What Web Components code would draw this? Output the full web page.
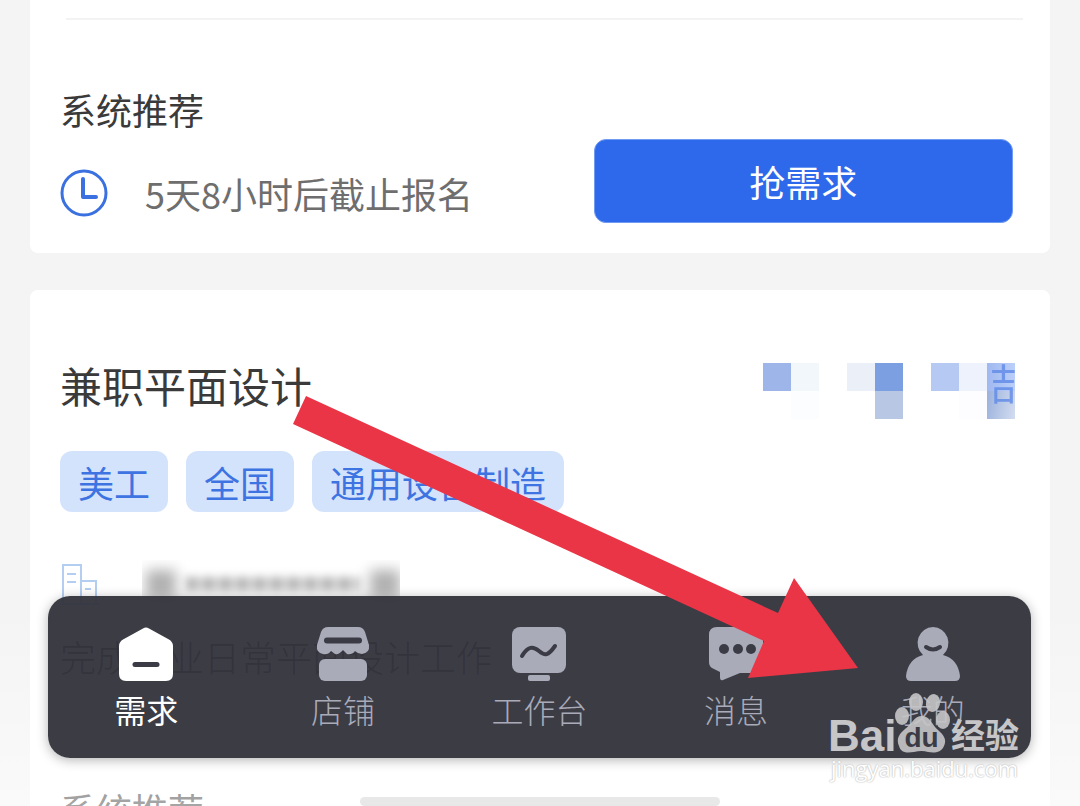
<!DOCTYPE html>
<html lang="zh-CN">
<head>
<meta charset="utf-8">
<meta name="viewport" content="width=device-width, initial-scale=1">
<title>需求</title>
<style>
  html, body { margin: 0; height: 100%; }
  body { font-family: "Noto Sans CJK SC", "Noto Sans", sans-serif; font-size: 36px; line-height: 48px; font-weight: 400; color: #3a3a3a; background: #f4f4f4; }
</style>
</head>
<body>
<demand-app>
  <demand-card>
    <section-rule></section-rule>
    <apply-row heading="系统推荐" action="抢需求">5天8小时后截止报名</apply-row>
  </demand-card>
  <demand-card>
    <demand-head>兼职平面设计</demand-head>
    <tag-list>
      <demand-tag>美工</demand-tag>
      <demand-tag>全国</demand-tag>
      <demand-tag>通用设备制造</demand-tag>
    </tag-list>
    <company-row></company-row>
    <demand-note>完成企业日常平面设计工作</demand-note>
    <section-rule></section-rule>
    <apply-row heading="系统推荐" action="抢需求">5天8小时后截止报名</apply-row>
  </demand-card>
  <tab-bar slot="tabs">
    <tab-item icon="home" active>需求</tab-item>
    <tab-item icon="shop">店铺</tab-item>
    <tab-item icon="board">工作台</tab-item>
    <tab-item icon="chat">消息</tab-item>
    <tab-item icon="user">我的</tab-item>
  </tab-bar>
  <guide-arrow slot="over"></guide-arrow>
  <site-mark slot="over" address="jingyan.baidu.com">经验</site-mark>
</demand-app>

<script>
const define = (name, html) => customElements.define(name, class extends HTMLElement {
  constructor() {
    super();
    const t = document.createElement('template');
    t.innerHTML = typeof html === 'function' ? html(this) : html;
    this.attachShadow({ mode: 'open' }).append(t.content.cloneNode(true));
  }
});

define('demand-app', `
<style>
  :host { display: block; position: relative; height: 100vh; overflow: hidden; }
  main { display: flex; flex-direction: column; gap: 37px; padding: 0 30px; }
  .fade { position: absolute; inset: auto 0 0 0; height: 200px; background: linear-gradient(rgba(255,255,255,0), rgba(255,255,255,.55)); }
  .home { position: absolute; bottom: 0; left: 50%; width: 360px; height: 9px; margin-left: -180px; border-radius: 5px; background: #e8e8e8; }
</style>
<main><slot></slot></main>
<div class="fade"></div>
<div class="home"></div>
<slot name="tabs"></slot>
<slot name="over"></slot>`);

define('demand-card', `
<style>
  :host { display: block; background: #fff; border-radius: 8px; padding: 0 37px 30px 30px; }
  :host(:first-child) { border-top-left-radius: 0; border-top-right-radius: 0; padding-top: 18px; }
</style>
<slot></slot>`);

define('section-rule', `
<style>
  :host { display: block; height: 2px; margin-left: 6px; margin-right: -10px; background: #f3f3f3; }
</style>`);

define('apply-row', el => `
<style>
  :host { display: flex; align-items: flex-end; justify-content: space-between; padding-top: 65px; }
  .info { display: flex; flex-direction: column; gap: 36px; padding-bottom: 6px; }
  h3 { margin: 0; font: inherit; }
  p { margin: 0; display: flex; gap: 37px; color: #6e6e6e; }
  svg { width: 48px; height: 48px; }
  button { width: 44%; height: 84px; border: 1px solid #6f9bf3; border-radius: 12px; background: #2d69ea; color: #fff; font: inherit; padding: 0; }
</style>
<div class="info">
  <h3>${el.getAttribute('heading')}</h3>
  <p><svg viewBox="0 0 48 48" fill="none" stroke="#3b70e0" aria-hidden="true"><circle cx="24" cy="24" r="22" stroke-width="3"/><path d="M23 10V28H36" stroke-width="4" stroke-linecap="round" stroke-linejoin="round"/></svg><span><slot></slot></span></p>
</div>
<button type="button">${el.getAttribute('action')}</button>`);

define('demand-head', `
<style>
  :host { display: flex; justify-content: space-between; padding-top: 65px; margin-right: -2px; }
  h2 { margin: 0; font: inherit; font-size: 42px; line-height: 60px; }
  .mosaic { position: relative; display: grid; grid-template-columns: repeat(9, 28px); grid-template-rows: 28px 28px; margin-top: 8px; }
  .clip { position: absolute; right: -2px; top: -9px; width: 25px; height: 56px; overflow: hidden; display: flex; justify-content: flex-end; color: #5f8ae8; font-size: 42px; line-height: 56px; opacity: .8; }
</style>
<h2><slot></slot></h2>
<div class="mosaic">
  <i style="background:#9db5e8"></i><i style="background:#f2f7fc"></i><i></i><i style="background:#ebf0f8"></i><i style="background:#7c9fe1"></i><i></i><i style="background:#b5c9f3"></i><i style="background:#edf2fc"></i><i style="background:linear-gradient(90deg,#9fb8ef,#bccffa)"></i>
  <i></i><i style="background:#fcfdff"></i><i></i><i></i><i style="background:#b8c7e3"></i><i></i><i></i><i style="background:#fdfdff"></i><i style="background:linear-gradient(100deg,#9bb1dc,#d3ddf0)"></i>
  <span class="clip">结</span>
</div>`);

define('tag-list', `
<style>:host { display: flex; gap: 18px; margin-top: 32px; }</style><slot></slot>`);

define('demand-tag', `
<style>
  :host { display: block; padding: 0 18px; height: 61px; line-height: 62px; border-radius: 12px; background: #d4e3fc; color: #3e73e2; }
</style><slot></slot>`);

define('company-row', `
<style>
  :host { display: flex; align-items: center; gap: 40px; height: 48px; margin-top: 48px; }
  svg { width: 42px; height: 42px; }
  .masked { display: flex; align-items: center; gap: 10px; width: 258px; height: 48px; overflow: hidden; }
  .masked b { width: 30px; height: 28px; background: #b0b0b0; filter: blur(7px); }
  .masked b:first-child { margin-left: 4px; }
  .masked i { flex: 1; height: 14px; background: repeating-linear-gradient(90deg, #b4b4b4 0 11px, #dcdcdc 11px 17px); filter: blur(4px); }
</style>
<svg viewBox="0 0 42 42" fill="none" stroke="#b4cef2" stroke-width="2" aria-hidden="true"><path d="M3 41V2H21V41M21 18H36V41M0 41H40"/><path d="M7 11H16M7 19H16M25 26H31"/></svg>
<div class="masked"><b></b><i></i><b></b></div>`);

define('demand-note', `
<style>:host { display: block; margin: 24px 0 38px; font-weight: 300; }</style><slot></slot>`);

define('tab-bar', `
<style>
  :host { position: absolute; left: 48px; right: 49px; bottom: 48px; height: 162px; display: flex; box-sizing: border-box; padding-top: 31px; border-radius: 22px; background: rgba(49,49,59,.95); box-shadow: 0 2px 12px rgba(0,0,0,.3); }
</style><slot></slot>`);

const icons = {
  home: '<path fill="currentColor" d="M24 1.500Q27-.5 30 1.500L50 12.500Q54 15 54 19V47Q54 54 47 54H7Q0 54 0 47V19Q0 15 4 12.500Z"/><path d="M16 37.500H38" stroke="#3b3b45" stroke-width="5" stroke-linecap="round"/>',
  shop: '<path fill="currentColor" d="M12 0H42Q47 0 49 5L53 18Q54 26 46 27Q42 27 39 24Q36 28 31 27L27 23Q23 28 19 27L15 24Q12 28 7 27Q0 26 1 18L5 5Q7 0 12 0Z"/><rect x="3" y="32" width="48" height="22" rx="6" fill="currentColor"/><path d="M11 13.500H43" stroke="#3b3b45" stroke-width="6" stroke-linecap="round"/>',
  board: '<rect x="0" y="0" width="54" height="46" rx="8" fill="currentColor"/><rect x="16" y="48" width="22" height="6" rx="2" fill="currentColor"/><path d="M10 29C16 19 21 19 27 24S36 29 43 19" fill="none" stroke="#3b3b45" stroke-width="4" stroke-linecap="round"/>',
  chat: '<path fill="currentColor" d="M8 0H46Q54 0 54 8V38Q54 46 46 46H31L14 53Q11 54 11 50V45L3 41Q0 39 0 35V8Q0 0 8 0Z"/><g fill="#3b3b45"><circle cx="15" cy="22" r="5"/><circle cx="29" cy="22" r="5"/><circle cx="42" cy="22" r="5"/></g>',
  user: '<path fill="currentColor" d="M27 0A16 16 0 0 1 37 28Q52 32 54 49Q54 54 49 54H5Q0 54 0 49Q2 32 17 28A16 16 0 0 1 27 0Z"/><path d="M20 20Q27 25 34 20" fill="none" stroke="#3b3b45" stroke-width="4" stroke-linecap="round"/>'
};

define('tab-item', el => `
<style>
  :host { display: block; flex: 1; color: #a9abb9; font-weight: 300; }
  :host([active]) { color: #fff; font-weight: 400; }
  a { display: flex; flex-direction: column; align-items: center; gap: 4px; color: inherit; text-decoration: none; font-size: 32px; line-height: 48px; }
  svg { width: 54px; height: 54px; }
</style>
<a href="#${el.getAttribute('icon')}"><svg viewBox="0 0 54 54" aria-hidden="true">${icons[el.getAttribute('icon')]}</svg><span><slot></slot></span></a>`);

define('guide-arrow', `
<style>
  :host { position: absolute; left: 293px; top: 396px; width: 565px; height: 283px; pointer-events: none; }
  svg { display: block; width: 100%; height: 100%; }
</style>
<svg viewBox="293 396 565 283" aria-hidden="true"><path fill="#ea3547" d="M306 396 778 613 794 578 858 668 748 678 764 641 293 424Z"/></svg>`);

define('site-mark', el => `
<style>
  :host { position: absolute; right: 59px; bottom: 24px; width: 193px; pointer-events: none; color: #c6c6c8; }
  .logo { display: flex; align-items: flex-end; height: 62px; }
  .bai { width: 66px; font: 700 44px/36px "Liberation Sans", sans-serif; }
  .paw { position: relative; width: 57px; height: 62px; }
  svg { display: block; width: 58px; height: 62px; opacity: .9; }
  .du { position: absolute; left: 0; right: 2px; bottom: 0; text-align: center; color: #3b3b45; font: 700 28px/32px "Liberation Sans", sans-serif; }
  .cn { font-weight: 700; font-size: 34px; line-height: 40px; }
  .url { display: block; color: #fff; font-family: "Open Sans", sans-serif; font-weight: 400; font-size: 22px; line-height: 28px; text-align: center; text-shadow: 0 0 2px #bbb, 0 0 1px #bbb; }
</style>
<div class="logo">
  <span class="bai">Bai</span>
  <span class="paw"><svg viewBox="0 0 58 62" fill="currentColor" aria-hidden="true"><ellipse cx="8" cy="24" rx="7" ry="9"/><ellipse cx="22" cy="10" rx="7" ry="9"/><ellipse cx="39" cy="11" rx="7" ry="9" transform="rotate(12 39 11)"/><ellipse cx="49" cy="28" rx="7" ry="9"/><path d="M28 24C36 24 38 33 44 38C50 43 53 48 50 54C47 61 40 61 34 60Q28 58 20 60C13 61 7 61 5 54C2 47 5 42 11 37C18 32 20 24 28 24Z"/></svg><span class="du">du</span></span>
  <span class="cn"><slot></slot></span>
</div>
<span class="url">${el.getAttribute('address')}</span>`);
</script>
</body>
</html>
